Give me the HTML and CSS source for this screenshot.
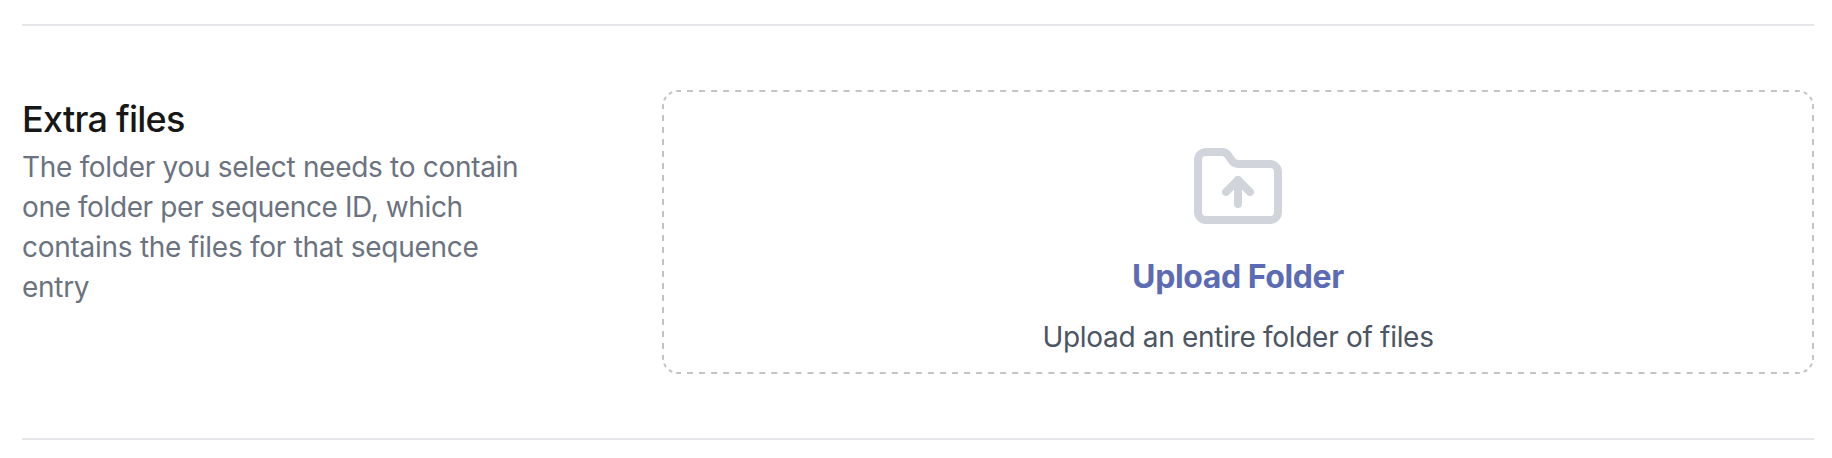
FILE: index.html
```
<!DOCTYPE html>
<html lang="en">
<head>
<meta charset="utf-8">
<title>Extra files</title>
<link rel="stylesheet" href="styles.css">
</head>
<body>
<section class="row">
  <div class="info">
    <h2 class="title">Extra files</h2>
    <p class="desc">The folder you select needs to contain<br><span class="tight">one folder per sequence ID, which</span><br><span class="loose">contains the files for that sequence</span><br>entry</p>
  </div>
  <div class="drop">
    <svg class="outline" viewBox="0 0 1152 284">
      <path pathLength="1116" d="M16 1H1136"/>
      <path pathLength="1116" d="M16 283H1136"/>
      <path pathLength="252" d="M1 16V268"/>
      <path pathLength="252" d="M1151 16V268"/>
      <path pathLength="36" d="M1 16A15 15 0 0 1 16 1"/>
      <path pathLength="36" d="M1136 1A15 15 0 0 1 1151 16"/>
      <path pathLength="36" d="M1151 268A15 15 0 0 1 1136 283"/>
      <path pathLength="36" d="M16 283A15 15 0 0 1 1 268"/>
    </svg>
    <svg class="icon" viewBox="0 0 24 24" fill="none" stroke="currentColor" stroke-width="2" stroke-linecap="round" stroke-linejoin="round"><path d="M20 20a2 2 0 0 0 2-2V8a2 2 0 0 0-2-2h-7.900a2 2 0 0 1-1.690-.9L9.600 3.900A2 2 0 0 0 7.930 3H4a2 2 0 0 0-2 2v13a2 2 0 0 0 2 2Z"/><path d="M12 10v6"/><path d="m9 13 3-3 3 3"/></svg>
    <div class="action">Upload Folder</div>
    <div class="hint">Upload an entire folder of files</div>
  </div>
</section>
</body>
</html>
```
FILE: styles.css
```
* { box-sizing: border-box; }
body { margin: 0; background: #fff; font-family: Inter, sans-serif; }
.row { margin: 24px 18px 0 22px; height: 416px; border-top: 2px solid #e5e7eb; border-bottom: 2px solid #e5e7eb; display: flex; padding-top: 64px; }
.info { width: 640px; padding-top: 9px; }
.title { margin: 0; font-size: 36px; line-height: 40px; font-weight: 500; color: #171717; letter-spacing: -0.75px; }
.desc { margin: 8px 0 0; font-size: 28px; line-height: 40px; color: #6b7280; letter-spacing: -0.3px; white-space: nowrap; }
.tight { letter-spacing: -0.39px; }
.loose { letter-spacing: -0.27px; }
.drop { position: relative; flex: 1; height: 284px; border-radius: 16px; display: flex; flex-direction: column; align-items: center; padding-top: 50px; }
.outline { position: absolute; inset: 0; width: 100%; height: 100%; fill: none; stroke: #c4c4c8; stroke-width: 2; stroke-dasharray: 6 6; stroke-dashoffset: 3; }
.icon { width: 96px; height: 96px; color: #d1d5db; }
.action { margin-top: 21px; font-size: 32px; line-height: 40px; font-weight: 650; color: #5b6bb5; letter-spacing: -0.4px; }
.hint { margin-top: 20px; font-size: 28px; line-height: 40px; color: #4b5563; letter-spacing: -0.3px; }
```
